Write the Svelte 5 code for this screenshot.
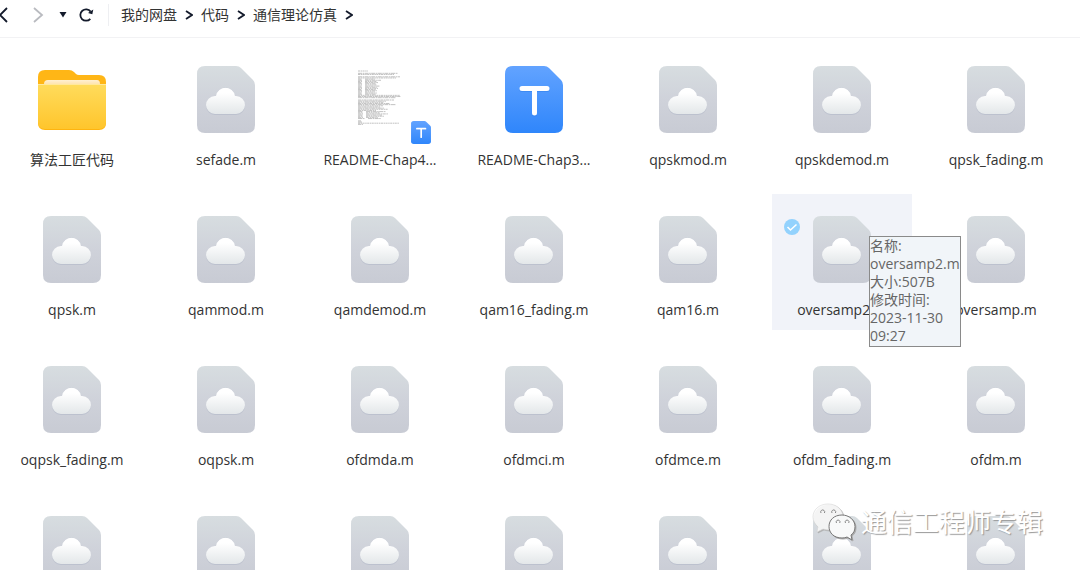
<script>
  const crumbs = ['我的网盘', '代码', '通信理论仿真'];

  const files = [
    { name: '算法工匠代码', type: 'folder' },
    { name: 'sefade.m' },
    { name: 'README-Chap4...', type: 'preview' },
    { name: 'README-Chap3...', type: 'text' },
    { name: 'qpskmod.m' },
    { name: 'qpskdemod.m' },
    { name: 'qpsk_fading.m' },
    { name: 'qpsk.m' },
    { name: 'qammod.m' },
    { name: 'qamdemod.m' },
    { name: 'qam16_fading.m' },
    { name: 'qam16.m' },
    { name: 'oversamp2.m', size: '507B', modified: '2023-11-30 09:27' },
    { name: 'oversamp.m' },
    { name: 'oqpsk_fading.m' },
    { name: 'oqpsk.m' },
    { name: 'ofdmda.m' },
    { name: 'ofdmci.m' },
    { name: 'ofdmce.m' },
    { name: 'ofdm_fading.m' },
    { name: 'ofdm.m' },
    ...Array.from({ length: 7 }, () => ({ name: '' }))
  ];

  // line lengths of the text preview, a pair is a two column line
  const lines = [
    [10], [0], [40], [36], [0], [42], [38], [4, 10], [4, 16], [4, 12], [4, 13], [4, 11], [4, 12],
    [4, 15], [4, 12], [4, 13], [4, 11], [4, 12], [4, 10], [4, 12], [4, 11], [42], [43], [38], [0],
    [36], [28], [26], [32], [38], [25], [22], [26], [30], [18], [5, 20], [5, 14], [5, 22], [5, 16],
    [5, 18], [5, 12], [7, 13], [0], [3], [4], [41], [5]
  ];

  let selected = $state('oversamp2.m');

  function toggle(name) {
    selected = selected === name ? null : name;
  }
</script>

<svelte:head>
  <title>通信理论仿真</title>
</svelte:head>

{#snippet chevron()}
  <svg class="chevron" width="8" height="10" viewBox="0 0 8 10" aria-hidden="true">
    <path d="M1 1l6 4-6 4" />
  </svg>
{/snippet}

{#snippet textIcon(small)}
  <svg class:small class="sheet" viewBox="0 0 58 67" aria-hidden="true">
    <path fill="url(#blue)" d="M8 0h31q3 0 5 2l12 12q2 2 2 5v40q0 8-8 8H8q-8 0-8-8V8q0-8 8-8z" />
    <path d="M17 23.500h25M29.500 23v25" stroke="#1f6fe0" stroke-opacity=".35" stroke-width="5" stroke-linecap="round" />
    <path d="M17 22.500h25M29.500 22.500v24.500" stroke="#fff" stroke-width="5" stroke-linecap="round" />
  </svg>
{/snippet}

<svg class="defs" width="0" height="0" aria-hidden="true">
  <defs>
    <linearGradient id="grey" x1="0" y1="0" x2="0" y2="1">
      <stop offset="0" stop-color="#d7dde0" />
      <stop offset=".5" stop-color="#cfd2da" />
      <stop offset="1" stop-color="#c8cbd4" />
    </linearGradient>
    <linearGradient id="cloud" x1="0" y1="0" x2="0" y2="1">
      <stop offset=".2" stop-color="#fff" />
      <stop offset="1" stop-color="#e3e7e9" />
    </linearGradient>
    <linearGradient id="blue" x1="0" y1="0" x2="0" y2="1">
      <stop offset="0" stop-color="#62a3ff" />
      <stop offset="1" stop-color="#2f86fb" />
    </linearGradient>
    <linearGradient id="front" x1="0" y1="0" x2="0" y2="1">
      <stop offset="0" stop-color="#ffdc5c" />
      <stop offset="1" stop-color="#ffc52c" />
    </linearGradient>
    <linearGradient id="paper" x1="0" y1="0" x2="0" y2="1">
      <stop offset="0" stop-color="#fff0d2" />
      <stop offset="1" stop-color="#ffd27a" />
    </linearGradient>
  </defs>
</svg>

<div class="page">
  <header>
    <button class="back" aria-label="后退">
      <svg width="11" height="16" viewBox="0 0 11 16"><path d="M9 1L2 8l7 7" /></svg>
    </button>
    <button class="forward" aria-label="前进" disabled>
      <svg width="11" height="16" viewBox="0 0 11 16"><path d="M1 1l8 7-8 7" /></svg>
    </button>
    <button class="history" aria-label="历史记录">
      <svg width="8" height="6" viewBox="0 0 8 6"><path d="M.5 0h7L4 5.500z" /></svg>
    </button>
    <button class="refresh" aria-label="刷新">
      <svg width="15" height="14" viewBox="0 0 15 14">
        <path d="M11.300 10.800A5.700 5.700 0 1 1 11.600 3.600" />
        <path class="head" d="M14.300 1.500l-1 4.700-4.300-1.200z" />
      </svg>
    </button>
    <nav>
      {#each crumbs as crumb}
        <a href="#{crumb}">{crumb}</a>
        {@render chevron()}
      {/each}
    </nav>
  </header>

  <ul>
    {#each files as { name, type, size, modified }}
      <li class:selected={name && name === selected}>
        <button class="file" aria-label={name || '文件'} onclick={() => toggle(name)}>
          <span class="icon">
            {#if type === 'folder'}
              <svg width="68" height="62" viewBox="0 -2 68 62" aria-hidden="true">
                <path fill="#ffb616" d="M7 0h24q3 0 5 2l2 2q1 1 3 1h20q7 0 7 7v30H0V7q0-7 7-7z" />
                <path fill="url(#paper)" d="M10 10h49q3 0 3 4v6H6v-6q0-4 4-4z" />
                <path fill="#ffb40f" d="M0 30h68v23q0 7-7 7H7q-7 0-7-7z" />
                <path fill="url(#front)" d="M0 14h68v38q0 7-7 7H7q-7 0-7-7z" />
                <path stroke="#ffe99c" d="M0 14.500h68" />
              </svg>
            {:else if type === 'preview'}
              <svg width="58" height="67" viewBox="0 0 58 67" aria-hidden="true">
                {#each lines as [first, second], i}
                  <path
                    class="line"
                    stroke-dasharray="{2 + (i % 3)} .6 1.500 .5"
                    d="M7 {5 + i * 1.16}h{first}{second ? `m3 0h${second}` : ''}" />
                {/each}
              </svg>
              <span class="badge">{@render textIcon(true)}</span>
            {:else if type === 'text'}
              {@render textIcon(false)}
            {:else}
              <svg class="sheet" viewBox="0 0 58 67" aria-hidden="true">
                <path fill="url(#grey)" d="M8 0h31q3 0 5 2l12 12q2 2 2 5v40q0 8-8 8H8q-8 0-8-8V8q0-8 8-8z" />
                <path
                  fill="#bcc1ce"
                  d="M18 49a9 9 0 0 1 0-18h1a9.500 9.500 0 0 1 19 0h1a9 9 0 0 1 0 18z" />
                <path
                  fill="url(#cloud)"
                  d="M18 48a9 9 0 0 1 0-18h1a9.600 9.600 0 0 1 19 0h1a9 9 0 0 1 0 18z" />
              </svg>
            {/if}
          </span>
          <span class="name">{name}</span>
        </button>
        {#if name && name === selected}
          <label class="check">
            <input type="checkbox" aria-label="选择 {name}" checked onchange={() => toggle(name)} />
            <svg width="16" height="16" viewBox="0 0 16 16" aria-hidden="true">
              <circle cx="8" cy="8" r="8" />
              <path d="M3.500 8l3 3 6-5.500" />
            </svg>
          </label>
        {/if}
        {#if size}
          <div class="tooltip" role="tooltip">
            <div>名称: {name}</div>
            <div>大小:{size}</div>
            <div>修改时间: {modified}</div>
          </div>
        {/if}
      </li>
    {/each}
  </ul>

  <div class="watermark">
    <svg width="44" height="38" viewBox="0 0 44 38" aria-hidden="true">
      <path d="M16 1C7 1 1 7 1 14c0 4 2 7 5 10l-1 5 6-3q3 1 7 1c8-1 13-6 13-13C31 7 25 1 16 1z" />
      <path
        class="front"
        d="M30 12c-8 0-13 5-13 11.500S22 35 30 35q3 0 5-1l5 3-1-5c3-2 4-5 4-8.500C43 17 37 12 30 12z" />
      <g>
        <path d="M9 10a2 2 0 1 1 3.400 0M20 10a2 2 0 1 1 3.400 0" />
        <path d="M24.500 20a1.900 1.900 0 1 1 3.200 0M33.500 20a1.900 1.900 0 1 1 3.200 0" />
      </g>
    </svg>
    <span>通信工程师专辑</span>
  </div>
</div>

<style>
  :global(body) {
    margin: 0;
    background: #fff;
  }

  .page {
    position: relative;
    display: flex;
    flex-direction: column;
    height: 100vh;
    overflow: hidden;
    color: #333;
    font-family: 'Open Sans', 'Noto Sans CJK SC', sans-serif;
    font-size: 14px;
  }

  .defs {
    position: absolute;
  }

  button {
    padding: 0;
    border: 0;
    background: none;
    color: inherit;
    font: inherit;
    cursor: pointer;
  }

  svg {
    display: block;
    fill: none;
  }

  header {
    display: flex;
    flex: none;
    align-items: center;
    height: 30px;
    padding-bottom: 7px;
    border-bottom: 1px solid #f2f2f4;
  }

  header svg {
    stroke: #131a2b;
    stroke-width: 1.8;
  }

  .back {
    margin-left: -2px;
  }

  .forward {
    margin-left: 24px;
  }

  .forward svg {
    stroke: #b9bbc0;
  }

  .history {
    margin-left: 15px;
  }

  .history svg,
  .refresh .head {
    fill: #131a2b;
    stroke: none;
  }

  .refresh {
    margin: 0 14px 0 12px;
  }

  nav {
    display: flex;
    align-items: center;
    gap: 8px;
    padding-left: 12px;
    border-left: 1px solid #eeeff2;
    line-height: 22px;
  }

  nav a {
    color: #333;
    text-decoration: none;
  }

  ul {
    display: grid;
    flex: 1;
    grid-template-columns: repeat(auto-fill, 140px);
    grid-auto-rows: 136px;
    gap: 14px;
    min-height: 0;
    margin: 0;
    padding: 6px 2px 0;
    list-style: none;
  }

  li {
    position: relative;
  }

  .selected {
    background: #f1f3f9;
  }

  .file {
    display: flex;
    flex-direction: column;
    align-items: center;
    width: 100%;
    height: 100%;
    padding-top: 21px;
  }

  .icon {
    position: relative;
    display: flex;
    align-items: center;
    justify-content: center;
    height: 68px;
  }

  .sheet {
    width: 58px;
    height: 67px;
  }

  .sheet.small {
    width: 20px;
    height: 23px;
  }

  .badge {
    position: absolute;
    right: -22px;
    bottom: -11px;
  }

  .line {
    stroke: #999;
    stroke-width: 0.6;
  }

  .name {
    margin-top: 17px;
    line-height: 20px;
    white-space: nowrap;
  }

  .check {
    position: absolute;
    top: 25px;
    left: 12px;
    display: grid;
  }

  .check input,
  .check svg {
    grid-area: 1 / 1;
    margin: 0;
  }

  .check input {
    width: 16px;
    height: 16px;
    opacity: 0;
  }

  .check circle {
    fill: #93d2fd;
  }

  .check path {
    stroke: #fff;
    stroke-width: 1.6;
  }

  .chevron {
    flex: none;
  }

  .tooltip {
    position: absolute;
    top: 42px;
    left: 97px;
    z-index: 1;
    box-sizing: border-box;
    width: 92px;
    padding-bottom: 1px;
    border: 1px solid #8a8a8a;
    background: #f1f5f9;
    color: #666;
    line-height: 18px;
  }

  .watermark {
    position: absolute;
    right: 37px;
    bottom: 29px;
    display: flex;
    align-items: center;
    gap: 5px;
    color: #fff;
    font-size: 26px;
    line-height: 38px;
    text-shadow: 1px 1px 1px #999;
  }

  .watermark svg {
    fill: #fff;
    fill-opacity: 0.85;
    stroke: #d4d4d4;
    stroke-width: 0.6;
    filter: drop-shadow(1px 1px 0 #aaa);
  }

  .watermark .front {
    fill: #f8f9f9;
    fill-opacity: 1;
    stroke: #777;
    stroke-width: 1;
  }

  .watermark g {
    fill: none;
    stroke: #888;
    stroke-width: 1;
  }
</style>
